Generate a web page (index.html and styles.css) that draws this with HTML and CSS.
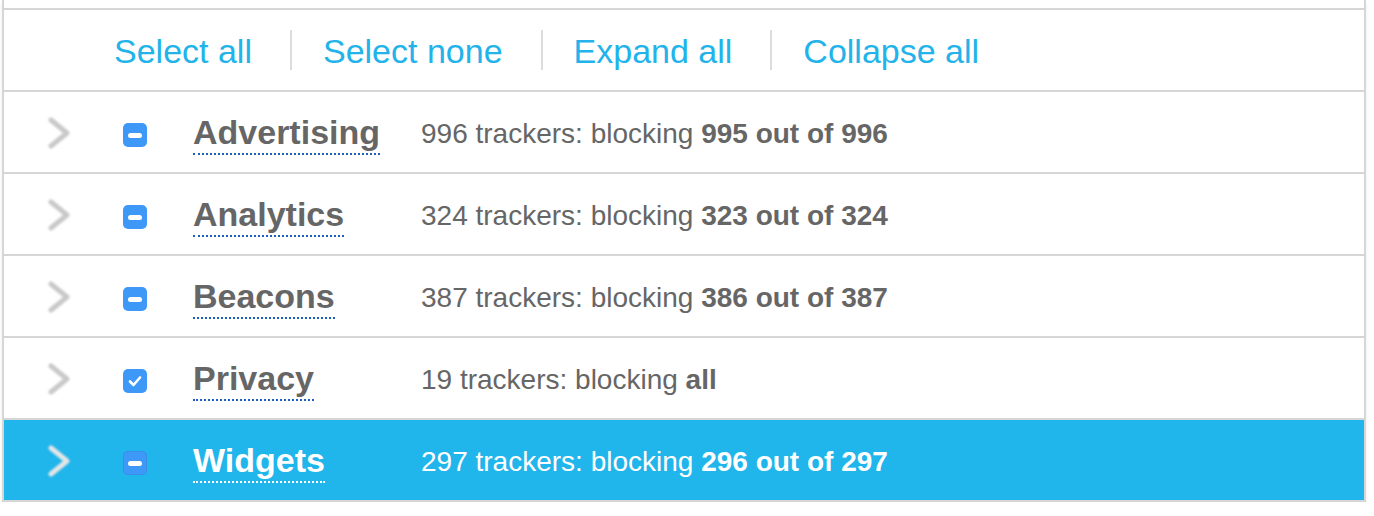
FILE: index.html
```html
<!DOCTYPE html>
<html lang="en">
<head>
    <meta charset="UTF-8">
    <title>Trackers</title>
    <link rel="stylesheet" href="styles.css">
</head>
<body>
    <div class="panel">
        <div class="toolbar">
            <a class="tool">Select all</a>
            <span class="sep"></span>
            <a class="tool">Select none</a>
            <span class="sep"></span>
            <a class="tool">Expand all</a>
            <span class="sep"></span>
            <a class="tool">Collapse all</a>
        </div>

        <div class="row">
            <svg class="chevron" width="30" height="36" viewBox="0 0 30 36"><polyline points="6,5 22,18 6,31"/></svg>
            <span class="box partial"></span>
            <span class="name"><span class="label">Advertising</span></span>
            <span class="desc">996 trackers: blocking <b>995 out of 996</b></span>
        </div>
        <div class="row">
            <svg class="chevron" width="30" height="36" viewBox="0 0 30 36"><polyline points="6,5 22,18 6,31"/></svg>
            <span class="box partial"></span>
            <span class="name"><span class="label">Analytics</span></span>
            <span class="desc">324 trackers: blocking <b>323 out of 324</b></span>
        </div>
        <div class="row">
            <svg class="chevron" width="30" height="36" viewBox="0 0 30 36"><polyline points="6,5 22,18 6,31"/></svg>
            <span class="box partial"></span>
            <span class="name"><span class="label">Beacons</span></span>
            <span class="desc">387 trackers: blocking <b>386 out of 387</b></span>
        </div>
        <div class="row">
            <svg class="chevron" width="30" height="36" viewBox="0 0 30 36"><polyline points="6,5 22,18 6,31"/></svg>
            <span class="box checked">
                <svg width="24" height="24" viewBox="0 0 24 24"><polyline points="7,12.5 10.5,16 17,8.5"/></svg>
            </span>
            <span class="name"><span class="label">Privacy</span></span>
            <span class="desc">19 trackers: blocking <b>all</b></span>
        </div>
        <div class="row selected">
            <svg class="chevron" width="30" height="36" viewBox="0 0 30 36"><polyline points="6,5 22,18 6,31"/></svg>
            <span class="box partial"></span>
            <span class="name"><span class="label">Widgets</span></span>
            <span class="desc">297 trackers: blocking <b>296 out of 297</b></span>
        </div>
    </div>
</body>
</html>
```

FILE: styles.css
```css
body {
    margin: 0;
    padding: 0;
    background: #fff;
    font-family: "Liberation Sans", Arial, sans-serif;
    color: #666;
}
.panel {
    width: 1360px;
    margin-left: 2px;
    padding-top: 8px;
    border-left: 2px solid #d6d6d6;
    border-right: 2px solid #d6d6d6;
    box-shadow: 0 3px 4px rgba(0, 0, 0, 0.08);
}
.toolbar {
    height: 80px;
    border-top: 2px solid #d6d6d6;
    border-bottom: 2px solid #d6d6d6;
    display: flex;
    align-items: center;
    padding-left: 110px;
}
.tool {
    font-size: 34px;
    color: #22b3ea;
    cursor: pointer;
    padding-top: 2px;
}
.sep {
    width: 2px;
    height: 40px;
    background: #dcdcdc;
    margin: 0 31px 0 38px;
}
.row {
    height: 80px;
    border-bottom: 2px solid #d6d6d6;
    display: flex;
    align-items: center;
}
.chevron {
    margin-left: 41px;
    margin-top: 2px;
    fill: none;
    stroke: #c9c9c9;
    stroke-width: 5;
    stroke-linecap: round;
    stroke-linejoin: round;
    filter: blur(0.9px);
}
.box {
    position: relative;
    width: 24px;
    height: 24px;
    border-radius: 5px;
    background: #3d98f8;
    margin-left: 48px;
    margin-top: 6px;
    flex-shrink: 0;
}
.box svg {
    display: block;
    fill: none;
    stroke: #fff;
    stroke-width: 2.6;
    stroke-linecap: round;
    stroke-linejoin: round;
}
.partial::after {
    content: "";
    position: absolute;
    left: 5px;
    top: 10px;
    width: 14px;
    height: 5px;
    border-radius: 3px;
    background: #fff;
}
.name {
    width: 228px;
    margin-left: 46px;
    flex-shrink: 0;
}
.label {
    display: inline-block;
    font-size: 34px;
    font-weight: bold;
    line-height: 34px;
    padding-bottom: 4px;
    border-bottom: 2px dotted #1d5fc0;
    margin-top: 5px;
}
.desc {
    font-size: 28px;
    margin-top: 4px;
}
.selected {
    background: #20b5eb;
    color: #fff;
    border-bottom: 2px solid #d6d6d6;
}
.selected .label {
    border-bottom-color: #fff;
}
.selected .chevron {
    stroke: #e6e6e6;
}
.selected .box {
    box-shadow: inset 0 0 0 1px #3a8ee8;
}
```
